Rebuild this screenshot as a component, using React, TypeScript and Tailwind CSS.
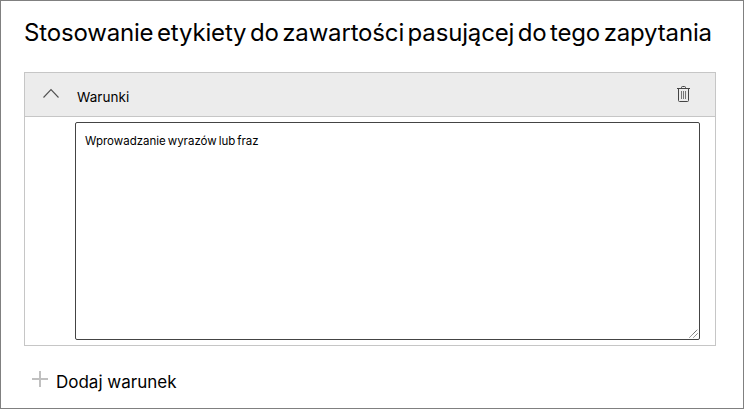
export default function App() {
  return (
    <main className="flex h-[409px] w-[744px] flex-col border border-[#808080] bg-white px-[23px] pt-[16px] font-['Inter','Liberation_Sans',sans-serif] text-black">
      <h1 className="h-8 text-[24px] leading-8 tracking-[-0.17px] [word-spacing:-3px] whitespace-nowrap">
        Stosowanie etykiety do zawartości pasującej do tego zapytania
      </h1>

      <section className="mt-[23px] h-[274px] w-[692px] border border-[#c6c6c6]">
        <header className="flex h-11 items-center border-b border-[#c6c6c6] bg-[#ececec] pr-[25px] pl-[18px]">
          <svg className="mb-1 h-4 w-4" viewBox="0 0 16 16" fill="none" stroke="#505050" strokeWidth="1.1">
            <path d="M0.5 12.5 8 4.5l7.5 8" />
          </svg>
          <h2 className="ml-[18px] pt-[5px] text-[13.5px] leading-5 tracking-[0.05px]">Warunki</h2>
          <button className="mb-[2px] ml-auto" aria-label="Usuń">
            <svg className="h-[17px] w-[13px]" viewBox="0 0 13 17" fill="none" stroke="#444444">
              <path d="M0 3.5h13M4.5 3v-0.5q0-1 1-1h2q1 0 1 1v0.5M1.5 3.5v12q0 1 1 1h8q1 0 1-1v-12" />
              <path d="M4.5 6v8M6.5 6v8M8.5 6v8" stroke="#777777" />
            </svg>
          </button>
        </header>
        <div className="flex pt-[5px] pl-[50px]">
          <div
            role="textbox"
            className="flex h-[218px] w-[625px] flex-col justify-between rounded-[2px] border border-[#444444] bg-white pt-[9px] pl-[9px] text-[11.5px] leading-[18px]"
          >
            <p className="[word-spacing:-1.3px] whitespace-nowrap">Wprowadzanie wyrazów lub fraz</p>
            <svg className="mr-px mb-px h-[9px] w-[9px] self-end" viewBox="0 0 9 9" stroke="#555555" fill="none">
              <path d="M0.5 8.5l8-8M4.5 8.5l4-4" strokeDasharray="1.2 0.4" />
            </svg>
          </div>
        </div>
      </section>

      <button className="mt-6 flex h-6 items-center self-start pl-[8px]">
        <svg className="mb-[6px] h-4 w-4" viewBox="0 0 16 16" fill="none" stroke="#c0c0c0" strokeWidth="2">
          <path d="M8 0v16M0 8h16" />
        </svg>
        <span className="ml-[8px] text-[17px] leading-6 whitespace-nowrap">Dodaj warunek</span>
      </button>
    </main>
  );
}
